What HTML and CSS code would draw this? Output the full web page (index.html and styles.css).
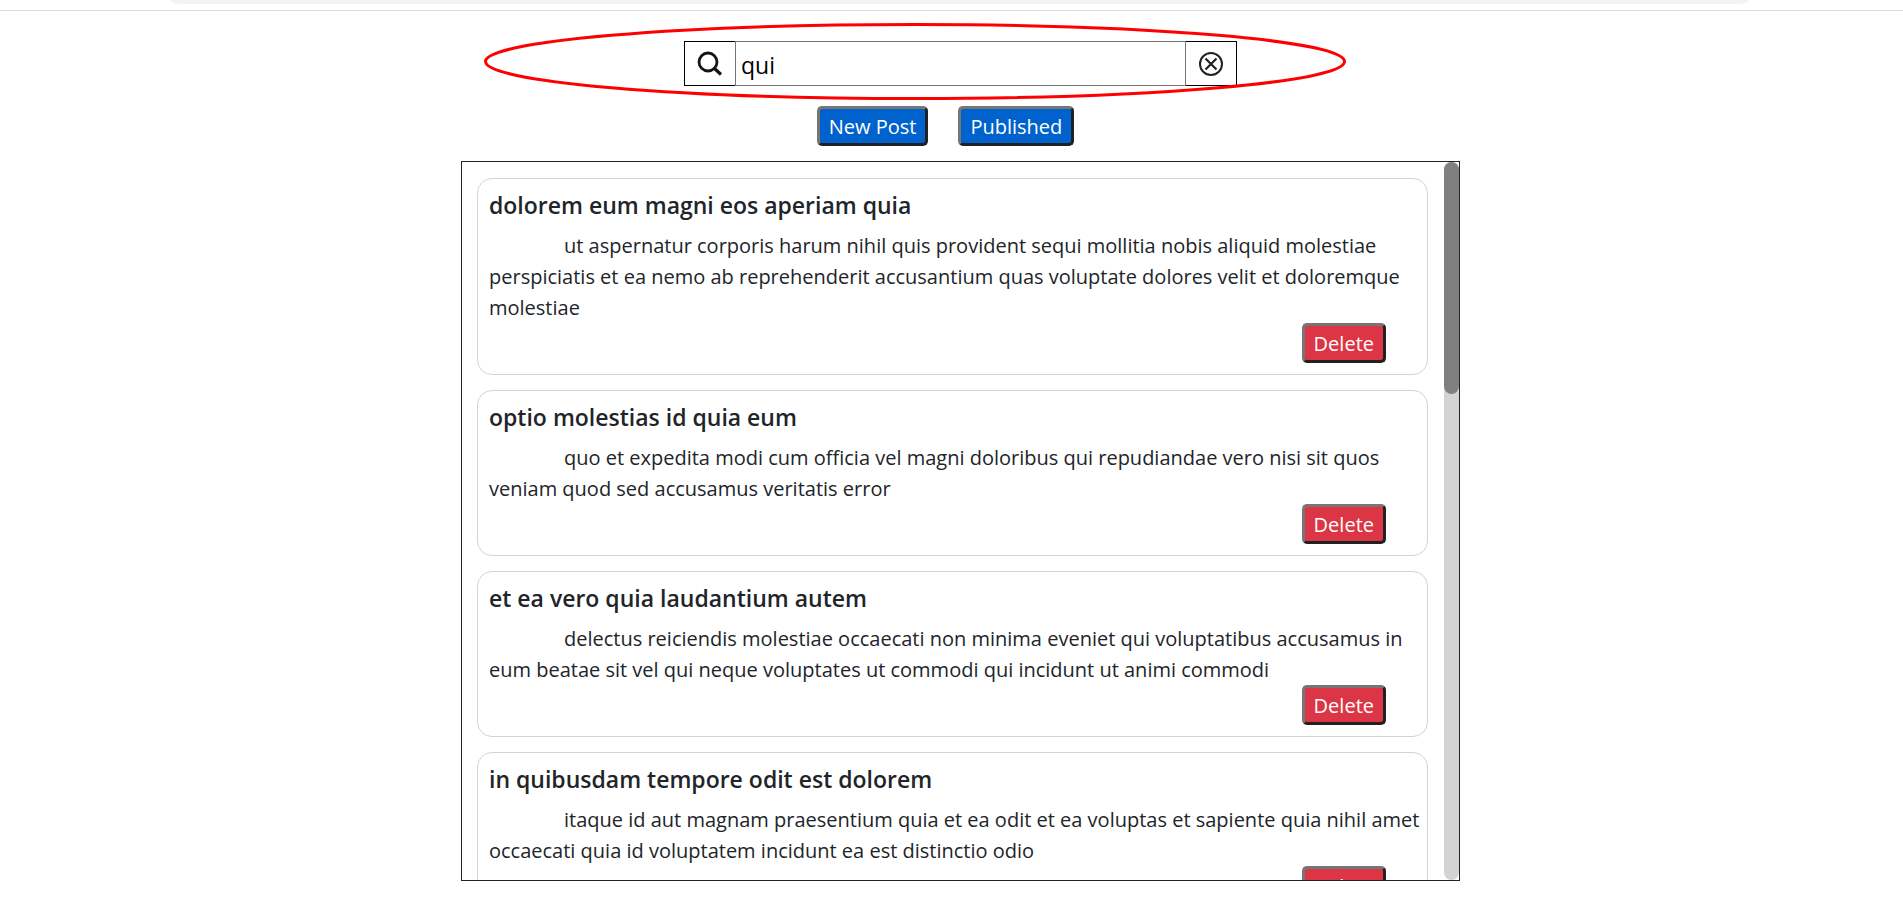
FILE: index.html
```html
<!DOCTYPE html>
<html lang="en">
<head>
<meta charset="utf-8">
<title>Posts</title>
<link rel="stylesheet" href="styles.css">
</head>
<body>
<div class="topbar"><div class="topbar-pill"></div></div>
<main class="page">
  <form class="search" role="search">
    <button class="search-button" type="button" aria-label="Search">
      <svg width="26" height="26" viewBox="0 0 26 26" fill="none" stroke="#151515">
        <circle cx="11" cy="11" r="9" stroke-width="2.8"/>
        <path d="M17.5 17.5L24 23.5" stroke-width="3.2"/>
      </svg>
    </button>
    <input class="search-input" type="text" value="qui" aria-label="Search posts">
    <button class="search-button" type="button" aria-label="Clear">
      <svg width="26" height="26" viewBox="0 0 26 26" fill="none" stroke="#222">
        <circle cx="13" cy="13" r="11" stroke-width="2"/>
        <path d="M7.5 7.5L18.5 18.5M18.5 7.5L7.5 18.5" stroke-width="2.2"/>
      </svg>
    </button>
    <svg class="highlight" viewBox="0 0 862 77" fill="none" stroke="#f00" stroke-width="3"><ellipse cx="431" cy="38.5" rx="429.5" ry="37"/></svg>
  </form>
  <div class="actions">
    <button class="btn btn-primary" type="button">New Post</button>
    <button class="btn btn-primary" type="button">Published</button>
  </div>
  <section class="panel">
    <div class="posts">
      <article class="card">
        <h2 class="card-title">dolorem eum magni eos aperiam quia</h2>
        <p class="card-text">ut aspernatur corporis harum nihil quis provident sequi mollitia nobis aliquid molestiae perspiciatis et ea nemo ab reprehenderit accusantium quas voluptate dolores velit et doloremque molestiae</p>
        <button class="btn btn-danger" type="button">Delete</button>
      </article>
      <article class="card">
        <h2 class="card-title">optio molestias id quia eum</h2>
        <p class="card-text">quo et expedita modi cum officia vel magni doloribus qui repudiandae vero nisi sit quos veniam quod sed accusamus veritatis error</p>
        <button class="btn btn-danger" type="button">Delete</button>
      </article>
      <article class="card">
        <h2 class="card-title">et ea vero quia laudantium autem</h2>
        <p class="card-text">delectus reiciendis molestiae occaecati non minima eveniet qui voluptatibus accusamus in eum beatae sit vel qui neque voluptates ut commodi qui incidunt ut animi commodi</p>
        <button class="btn btn-danger" type="button">Delete</button>
      </article>
      <article class="card">
        <h2 class="card-title">in quibusdam tempore odit est dolorem</h2>
        <p class="card-text">itaque id aut magnam praesentium quia et ea odit et ea voluptas et sapiente quia nihil amet occaecati quia id voluptatem incidunt ea est distinctio odio</p>
        <button class="btn btn-danger" type="button">Delete</button>
      </article>
    </div>
    <div class="scroll-track"><div class="scroll-thumb"></div></div>
  </section>
</main>
</body>
</html>
```
FILE: styles.css
```css
* {
  box-sizing: border-box;
}

body {
  margin: 0;
  height: 100vh;
  display: flex;
  flex-direction: column;
  overflow: hidden;
  background: #fff;
  color: #212529;
  font-family: "Segoe UI", "Open Sans", sans-serif;
  font-size: 20px;
  line-height: 31px;
}

.topbar {
  height: 11px;
  flex: none;
  padding: 0 154px 0 170px;
  border-bottom: 1px solid #dadada;
}

.topbar-pill {
  height: 4px;
  background: #f1f3f4;
  border-radius: 0 0 12px 12px / 0 0 4px 4px;
}

.page {
  flex: 1;
  min-height: 0;
  display: flex;
  flex-direction: column;
  align-items: center;
  padding: 30px 0 36px 18px;
}

.search {
  position: relative;
  display: flex;
  width: 553px;
  height: 45px;
  flex: none;
}

.search-button {
  width: 51px;
  display: flex;
  align-items: center;
  justify-content: center;
  padding: 0;
  border: 1px solid #000;
  background: #fff;
}

.search-button:first-child {
  border-right: 0;
}

.search-input + .search-button {
  border-left: 0;
}

.search-input {
  flex: 1;
  min-width: 0;
  padding: 4px 5px 0;
  border: 1px solid #767676;
  background: #fff;
  color: #000;
  font: inherit;
  font-size: 23px;
  outline: 0;
}

.highlight {
  position: absolute;
  left: -200px;
  top: -18px;
  width: 862px;
  height: 77px;
  pointer-events: none;
}

.actions {
  display: flex;
  flex: none;
  padding: 20px 0 15px;
}

.btn {
  height: 40px;
  padding: 2px 9px 0;
  border: 3px solid;
  border-color: #767676 #212121 #212121 #767676;
  border-radius: 5px;
  color: #fff;
  font: inherit;
  line-height: 32px;
}

.btn-primary {
  margin-right: 30px;
  background: #0062cc;
}

.btn-danger {
  display: block;
  margin: 0 30px 0 auto;
  background: #dc3545;
}

.panel {
  flex: 1;
  min-height: 0;
  width: 999px;
  max-width: 100%;
  display: flex;
  border: 1px solid #212529;
}

.posts {
  flex: 1;
  display: flex;
  flex-direction: column;
  gap: 15px;
  padding: 16px 16px 0 15px;
  overflow: hidden;
}

.card {
  flex: none;
  padding: 11px 0 11px 11px;
  border: 1px solid #d3d3d3;
  border-radius: 15px;
}

.card-title {
  margin: 0 0 10px;
  font-size: 23px;
  font-weight: 600;
  line-height: 30px;
}

.card-text {
  margin: 0;
  text-indent: 75px;
}

.card .btn-danger {
  margin-right: 41px;
}

.scroll-track {
  width: 15px;
  background: #d3d3d3;
  border-radius: 8px;
}

.scroll-thumb {
  height: 232px;
  background: #808080;
  border-radius: 8px;
}
```
